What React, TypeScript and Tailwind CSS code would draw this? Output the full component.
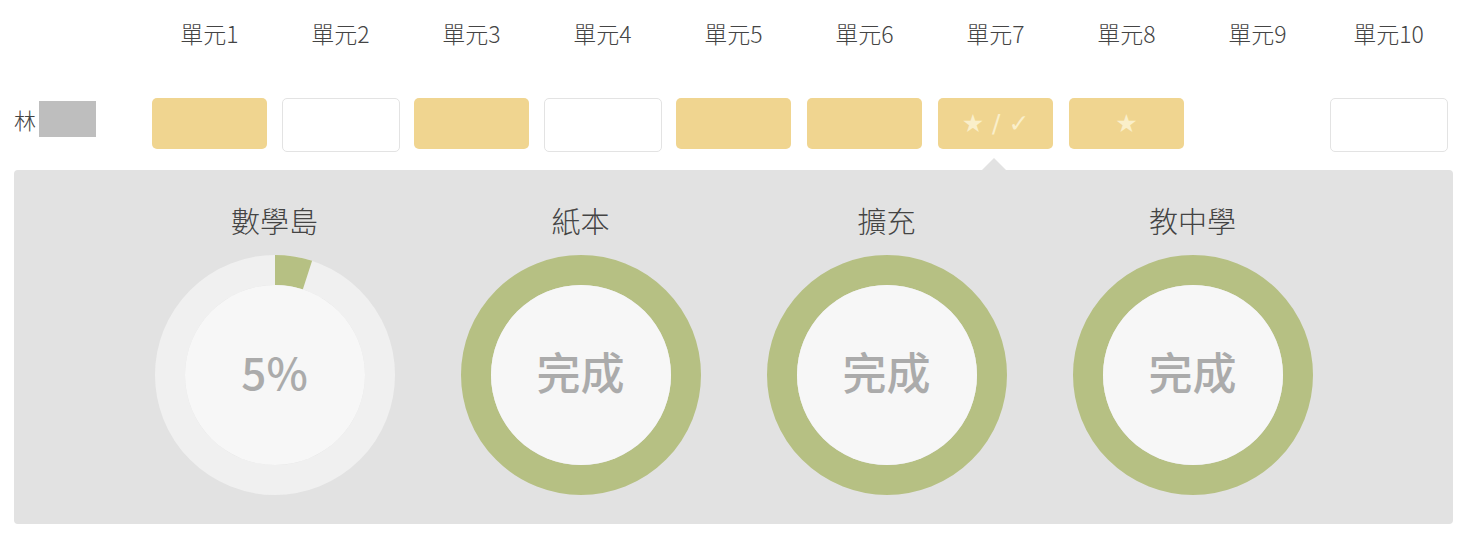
import React from "react";

const units = ["單元1","單元2","單元3","單元4","單元5","單元6","單元7","單元8","單元9","單元10"];
type Cell = { kind: "filled" | "empty" | "none"; text?: string };
const cells: Cell[] = [
  { kind: "filled" },
  { kind: "empty" },
  { kind: "filled" },
  { kind: "empty" },
  { kind: "filled" },
  { kind: "filled" },
  { kind: "filled", text: "★ / ✓" },
  { kind: "filled", text: "★" },
  { kind: "none" },
  { kind: "empty" },
];

function Donut({ percent, label }: { percent: number; label: string }) {
  const r = 105;
  const c = 2 * Math.PI * r;
  const full = percent >= 100;
  return (
    <div className="relative w-[240px] h-[240px]">
      <svg width="240" height="240" viewBox="0 0 240 240" className="absolute inset-0">
        <circle cx="120" cy="120" r={r} fill="none" stroke={full ? "#b6c083" : "#f0f0f0"} strokeWidth="30" />
        {!full && (
          <circle
            cx="120"
            cy="120"
            r={r}
            fill="none"
            stroke="#b6c083"
            strokeWidth="30"
            strokeDasharray={`${(c * percent) / 100} ${c}`}
            transform="rotate(-90 120 120)"
          />
        )}
        <circle cx="120" cy="120" r="90" fill="#f7f7f7" />
      </svg>
      <div className="absolute inset-0 flex items-center justify-center pb-[8px] text-[44px] font-medium text-[#ababab] leading-none">
        {label}
      </div>
    </div>
  );
}

export default function App() {
  const font = { fontFamily: '"Noto Sans CJK TC", "Noto Sans", sans-serif' };
  return (
    <div className="w-[1475px] h-[539px] bg-white" style={font}>
      <div className="ml-[14px] w-[1439px]">
        <div className="grid grid-cols-[130px_repeat(10,131px)] h-[66px] items-center">
          <div />
          {units.map((u) => (
            <div key={u} className="text-center text-[23px] font-light text-[#444]">{u}</div>
          ))}
        </div>
        <div className="grid grid-cols-[130px_repeat(10,131px)] pt-[32px] items-start h-[104px]">
          <div className="flex items-center pt-[3px]">
            <span className="text-[22px] font-light text-[#444] leading-[36px]">林</span>
            <span className="w-[57px] h-[36px] bg-[#bebebe] ml-[3px]" />
          </div>
          {cells.map((c, i) => (
            <div key={i} className="flex justify-center">
              {c.kind === "filled" && (
                <div
                  className="w-[115px] h-[51px] rounded-[5px] bg-[#f0d590] flex items-center justify-center text-[25px] text-[#faefca]"
                  style={{ fontFamily: '"DejaVu Sans", "Noto Sans CJK TC", sans-serif' }}
                >
                  {c.text}
                </div>
              )}
              {c.kind === "empty" && (
                <div className="w-[118px] h-[54px] rounded-[5px] bg-white border border-[#e3e3e3]" />
              )}
            </div>
          ))}
        </div>
        <div className="relative bg-[#e2e2e2] rounded-[4px] h-[354px] flex justify-center">
          <div className="absolute left-[968px] top-[-12px] w-0 h-0 border-l-[12px] border-r-[12px] border-b-[12px] border-l-transparent border-r-transparent border-b-[#e2e2e2]" />
          {[
            { t: "數學島", p: 5, l: "5%" },
            { t: "紙本", p: 100, l: "完成" },
            { t: "擴充", p: 100, l: "完成" },
            { t: "教中學", p: 100, l: "完成" },
          ].map((d) => (
            <div key={d.t} className="w-[306px] flex flex-col items-center">
              <div className="text-[29px] font-light text-[#444] h-[50px] mt-[25px] leading-[50px]">{d.t}</div>
              <div className="mt-[10px]">
                <Donut percent={d.p} label={d.l} />
              </div>
            </div>
          ))}
        </div>
      </div>
    </div>
  );
}
